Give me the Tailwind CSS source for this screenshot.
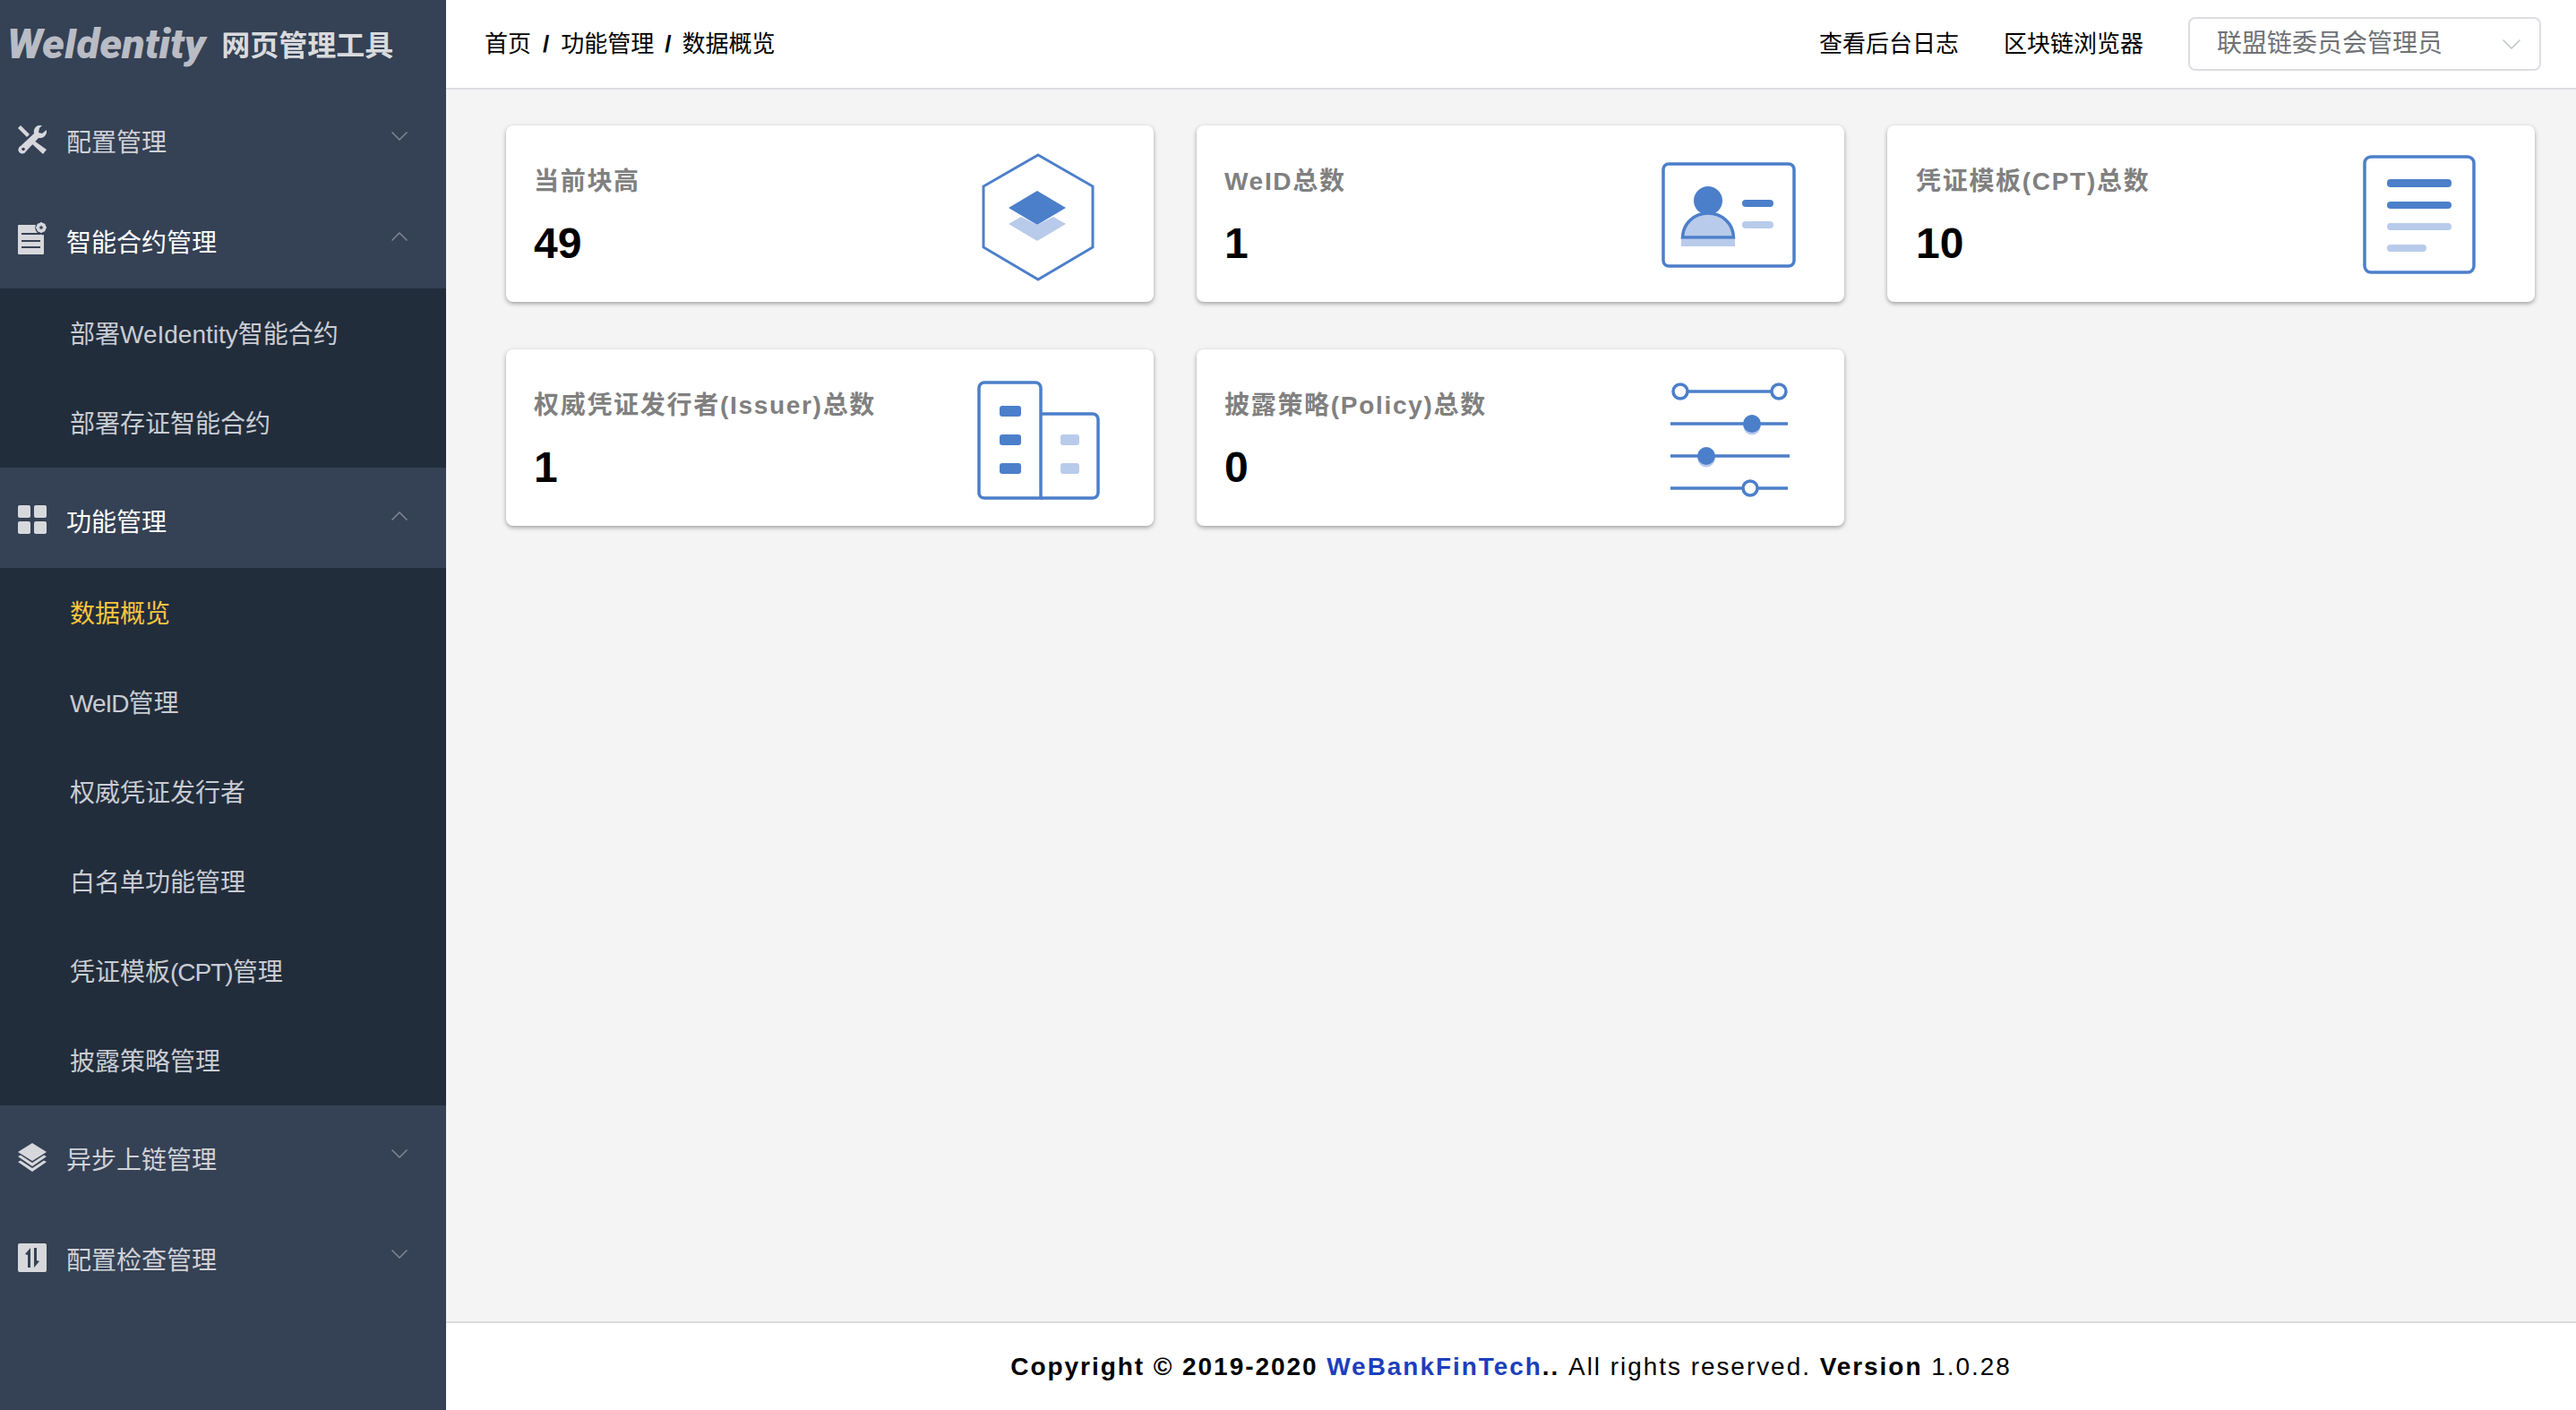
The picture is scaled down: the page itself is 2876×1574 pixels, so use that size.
<!DOCTYPE html>
<html lang="zh-CN">
<head>
    <meta charset="UTF-8">
    <title>WeIdentity 网页管理工具</title>
    <script src="https://cdn.jsdelivr.net/npm/@tailwindcss/browser@4"></script>
</head>
<body class="h-screen w-full overflow-hidden flex bg-[#f4f4f4] text-black font-['Liberation_Sans','Noto_Sans_CJK_SC',sans-serif]">

    <!-- Sidebar -->
    <aside class="w-[498px] h-full shrink-0 bg-[#354154] text-[28px] text-[#d0d2d8]">
        <div class="h-[98px] flex items-center pl-[8px]">
            <span class="font-['Roboto',sans-serif] font-black italic text-[47px] text-[#b9bcc4]">WeIdentity</span>
            <span class="ml-[18px] mt-[4px] text-[32px] font-bold text-[#d9dade]">网页管理工具</span>
        </div>

        <div class="h-[112px] flex items-center pl-[20px] pr-[43px]">
            <svg class="w-[32px] h-[32px] mt-[4px] shrink-0 text-[#d7d8dc]" viewBox="0 0 32 32" fill="currentColor">
                <path d="M0 3 L3 0 L13 10 L10 13 Z"/>
                <path d="M18 17 L32 27 L28 32 L15 20 Z"/>
                <path d="M32 5 L27 9 L23 8 L24 3 L27 0 C21 -1 17 3 18 9 L3 23 A4.5 4.5 0 1 0 9 29 L23 14 C28 15 33 11 32 5 Z"/>
                <circle cx="6" cy="26.5" r="1.8" fill="#354154"/>
            </svg>
            <span class="ml-[22px] mt-[12px]">配置管理</span>
            <svg class="ml-auto w-[18px] h-[10px] mb-[4px] text-[#7f8794]" viewBox="0 0 18 10" fill="none" stroke="currentColor" stroke-width="1.5"><path d="M0.5 0.5 L9 9 L17.5 0.5"/></svg>
        </div>

        <div class="h-[112px] flex items-center pl-[20px] pr-[43px] text-white">
            <svg class="w-[32px] h-[36px] shrink-0 text-[#d7d8dc]" viewBox="0 0 32 36" fill="currentColor">
                <path d="M1 3 H20 A8 8 0 0 0 29 14 V35 A1 1 0 0 1 28 36 H1 A1 1 0 0 1 0 35 V4 A1 1 0 0 1 1 3 Z"/>
                <path d="M4 13 H25 M4 21 H25 M4 28 H25" stroke="#354154" stroke-width="2" fill="none"/>
                <circle cx="26" cy="6" r="4" fill="none" stroke="currentColor" stroke-width="3"/>
                <path d="M26 0 V12 M20 6 H32 M22 2 L30 10 M30 2 L22 10" stroke="currentColor" stroke-width="1.6" fill="none"/>
                <circle cx="26" cy="6" r="1.8" fill="#354154"/>
            </svg>
            <span class="ml-[22px] mt-[12px]">智能合约管理</span>
            <svg class="ml-auto w-[18px] h-[10px] mb-[4px] text-[#7f8794]" viewBox="0 0 18 10" fill="none" stroke="currentColor" stroke-width="1.5"><path d="M0.5 9.5 L9 1 L17.5 9.5"/></svg>
        </div>

        <div class="bg-[#222d3c] text-[#c9ccd2]">
            <div class="h-[100px] flex items-center pl-[78px] pt-[4px]">部署WeIdentity智能合约</div>
            <div class="h-[100px] flex items-center pl-[78px] pt-[4px]">部署存证智能合约</div>
        </div>

        <div class="h-[112px] flex items-center pl-[20px] pr-[43px] text-white">
            <svg class="w-[32px] h-[32px] mt-[4px] shrink-0 text-[#d7d8dc]" viewBox="0 0 32 32" fill="currentColor">
                <rect x="0" y="0" width="14" height="14" rx="2"/>
                <rect x="18" y="0" width="14" height="14" rx="2"/>
                <rect x="0" y="18" width="14" height="14" rx="2"/>
                <rect x="18" y="18" width="14" height="14" rx="2"/>
            </svg>
            <span class="ml-[22px] mt-[12px]">功能管理</span>
            <svg class="ml-auto w-[18px] h-[10px] mb-[4px] text-[#7f8794]" viewBox="0 0 18 10" fill="none" stroke="currentColor" stroke-width="1.5"><path d="M0.5 9.5 L9 1 L17.5 9.5"/></svg>
        </div>

        <div class="bg-[#222d3c] text-[#c9ccd2]">
            <div class="h-[100px] flex items-center pl-[78px] pt-[4px] text-[#fbc63c]">数据概览</div>
            <div class="h-[100px] flex items-center pl-[78px] pt-[4px]"><span class="tracking-[-1px]">WeID</span>管理</div>
            <div class="h-[100px] flex items-center pl-[78px] pt-[4px]">权威凭证发行者</div>
            <div class="h-[100px] flex items-center pl-[78px] pt-[4px]">白名单功能管理</div>
            <div class="h-[100px] flex items-center pl-[78px] pt-[4px]">凭证模板<span class="tracking-[-1px]">(CPT)</span>管理</div>
            <div class="h-[100px] flex items-center pl-[78px] pt-[4px]">披露策略管理</div>
        </div>

        <div class="h-[112px] flex items-center pl-[20px] pr-[43px]">
            <svg class="w-[32px] h-[32px] mt-[4px] shrink-0 text-[#d7d8dc]" viewBox="0 0 32 32" fill="currentColor">
                <path d="M16 0 L32 10 L16 20 L0 10 Z"/>
                <path d="M0 15 L3 13.5 L16 22 L29 13.5 L32 15 L16 26 Z"/>
                <path d="M0 21 L3 19.5 L16 28 L29 19.5 L32 21 L16 32 Z"/>
            </svg>
            <span class="ml-[22px] mt-[12px]">异步上链管理</span>
            <svg class="ml-auto w-[18px] h-[10px] mb-[4px] text-[#7f8794]" viewBox="0 0 18 10" fill="none" stroke="currentColor" stroke-width="1.5"><path d="M0.5 0.5 L9 9 L17.5 0.5"/></svg>
        </div>

        <div class="h-[112px] flex items-center pl-[20px] pr-[43px]">
            <svg class="w-[32px] h-[32px] mt-[4px] shrink-0 text-[#d7d8dc]" viewBox="0 0 32 32">
                <rect width="32" height="32" rx="2" fill="currentColor"/>
                <path d="M8 12 L14 5 V27 H11 V13 Z" fill="#354154"/>
                <path d="M24 20 L18 27 V5 H21 V19 Z" fill="#354154"/>
            </svg>
            <span class="ml-[22px] mt-[12px]">配置检查管理</span>
            <svg class="ml-auto w-[18px] h-[10px] mb-[4px] text-[#7f8794]" viewBox="0 0 18 10" fill="none" stroke="currentColor" stroke-width="1.5"><path d="M0.5 0.5 L9 9 L17.5 0.5"/></svg>
        </div>
    </aside>

    <div class="flex-1 min-w-0 h-full flex flex-col">
        <!-- Header -->
        <header class="h-[100px] shrink-0 bg-white border-b-2 border-[#dcdee2] flex items-center pl-[43px] pr-[39px] text-[26px] leading-none">
            <span class="flex items-center">
                <span>首页</span>
                <span class="mx-[13px] font-bold">/</span>
                <span>功能管理</span>
                <span class="mx-[12px] font-bold">/</span>
                <span>数据概览</span>
            </span>
            <span class="ml-auto">查看后台日志</span>
            <span class="ml-[50px]">区块链浏览器</span>
            <div class="ml-[50px] w-[394px] h-[60px] border-2 border-[#dcdee2] rounded-[8px] flex items-center pl-[30px] pr-[21px] text-[28px] text-[#6f7276]">
                <span>联盟链委员会管理员</span>
                <svg class="ml-auto w-[20px] h-[11px] text-[#c0c4cc]" viewBox="0 0 20 11" fill="none" stroke="currentColor" stroke-width="1.5"><path d="M0.5 0.5 L10 10 L19.5 0.5"/></svg>
            </div>
        </header>

        <!-- Cards -->
        <main class="flex-1 min-h-0 pt-[40px] pl-[67px] pr-[43px]">
            <div class="grid grid-cols-[723px_723px_723px] gap-x-[48px] gap-y-[53px]">

                <div class="h-[197px] bg-white rounded-[8px] shadow-[0_2px_5px_rgba(0,0,0,0.35)] flex justify-between pl-[31px]">
                    <div>
                        <div class="mt-[46px] text-[28px] leading-[34px] font-bold text-[#808080] tracking-[1.7px]">当前块高</div>
                        <div class="mt-[27px] text-[48px] leading-[50px] font-bold">49</div>
                    </div>
                    <svg class="w-[126px] h-[146px] mt-[30px] mr-[66px]" viewBox="1096 170 126 146" fill="none">
                        <path d="M1159 173 L1220 208 V276 L1159 312 L1098 276 V208 Z" stroke="#4c7fca" stroke-width="3"/>
                        <path d="M1126 232 L1158 251 L1190 232 L1158 213 Z" fill="#4c7fca"/>
                        <path d="M1126 250 L1140 242 L1158 251 L1176 242 L1190 250 L1158 269 Z" fill="#b9cbeb"/>
                    </svg>
                </div>

                <div class="h-[197px] bg-white rounded-[8px] shadow-[0_2px_5px_rgba(0,0,0,0.35)] flex justify-between pl-[31px]">
                    <div>
                        <div class="mt-[46px] text-[28px] leading-[34px] font-bold text-[#808080] tracking-[1.7px]">WeID总数</div>
                        <div class="mt-[27px] text-[48px] leading-[50px] font-bold">1</div>
                    </div>
                    <svg class="w-[152px] h-[118px] mt-[41px] mr-[52px]" viewBox="1854 181 152 118" fill="none">
                        <rect x="1856" y="183" width="146" height="114" rx="6" stroke="#4c7fca" stroke-width="3.5"/>
                        <circle cx="1906" cy="224" r="16" fill="#4c7fca"/>
                        <path d="M1877.5 265 C1878 249 1891 238 1906 238 C1921 238 1934 249 1934.5 265 Z" fill="#b9cbeb" stroke="#4c7fca" stroke-width="3.5"/>
                        <rect x="1876" y="267" width="60" height="8" fill="#b9cbeb"/>
                        <rect x="1944" y="223" width="35" height="8" rx="4" fill="#4c7fca"/>
                        <rect x="1944" y="247" width="35" height="8" rx="4" fill="#b9cbeb"/>
                    </svg>
                </div>

                <div class="h-[197px] bg-white rounded-[8px] shadow-[0_2px_5px_rgba(0,0,0,0.35)] flex justify-between pl-[32px]">
                    <div>
                        <div class="mt-[46px] text-[28px] leading-[34px] font-bold text-[#808080] tracking-[1.7px]">凭证模板(CPT)总数</div>
                        <div class="mt-[27px] text-[48px] leading-[50px] font-bold">10</div>
                    </div>
                    <svg class="w-[126px] h-[133px] mt-[33px] mr-[66px]" viewBox="2638 173 126 133" fill="none">
                        <rect x="2640" y="175" width="122" height="129" rx="7" stroke="#4c7fca" stroke-width="3.5"/>
                        <rect x="2665" y="200" width="72" height="9" rx="4" fill="#4c7fca"/>
                        <rect x="2665" y="225" width="72" height="8" rx="4" fill="#4c7fca"/>
                        <rect x="2665" y="249" width="72" height="8" rx="4" fill="#b9cbeb"/>
                        <rect x="2665" y="273" width="44" height="8" rx="4" fill="#b9cbeb"/>
                    </svg>
                </div>

                <div class="h-[197px] bg-white rounded-[8px] shadow-[0_2px_5px_rgba(0,0,0,0.35)] flex justify-between pl-[31px]">
                    <div>
                        <div class="mt-[46px] text-[28px] leading-[34px] font-bold text-[#808080] tracking-[1.7px]">权威凭证发行者(Issuer)总数</div>
                        <div class="mt-[27px] text-[48px] leading-[50px] font-bold">1</div>
                    </div>
                    <svg class="w-[137px] h-[133px] mt-[35px] mr-[60px]" viewBox="1091 425 137 133" fill="none">
                        <path d="M1093 551 V433 A6 6 0 0 1 1099 427 H1156 A6 6 0 0 1 1162 433 V556 H1099 A6 6 0 0 1 1093 551 Z" stroke="#4c7fca" stroke-width="3.5"/>
                        <path d="M1162 462 H1220 A6 6 0 0 1 1226 468 V550 A6 6 0 0 1 1220 556 H1162" stroke="#4c7fca" stroke-width="3.5"/>
                        <rect x="1116" y="453" width="24" height="12" rx="3" fill="#4c7fca"/>
                        <rect x="1116" y="485" width="24" height="12" rx="3" fill="#4c7fca"/>
                        <rect x="1116" y="517" width="24" height="12" rx="3" fill="#4c7fca"/>
                        <rect x="1184" y="485" width="21" height="12" rx="3" fill="#b9cbeb"/>
                        <rect x="1184" y="517" width="21" height="12" rx="3" fill="#b9cbeb"/>
                    </svg>
                </div>

                <div class="h-[197px] bg-white rounded-[8px] shadow-[0_2px_5px_rgba(0,0,0,0.35)] flex justify-between pl-[31px]">
                    <div>
                        <div class="mt-[46px] text-[28px] leading-[34px] font-bold text-[#808080] tracking-[1.7px]">披露策略(Policy)总数</div>
                        <div class="mt-[27px] text-[48px] leading-[50px] font-bold">0</div>
                    </div>
                    <svg class="w-[136px] h-[130px] mt-[35px] mr-[59px]" viewBox="1864 425 136 130" fill="none" stroke="#4c7fca" stroke-width="3.5">
                        <path d="M1885 437 H1977 M1865 473 H1996 M1865 509 H1998 M1865 545 H1996"/>
                        <circle cx="1876" cy="437" r="8" fill="white"/>
                        <circle cx="1986" cy="437" r="8" fill="white"/>
                        <circle cx="1956" cy="476" r="9.5" fill="#b9cbeb" stroke="none"/>
                        <circle cx="1956" cy="473" r="10" fill="#4c7fca" stroke="none"/>
                        <circle cx="1905" cy="512" r="9.5" fill="#b9cbeb" stroke="none"/>
                        <circle cx="1905" cy="509" r="10" fill="#4c7fca" stroke="none"/>
                        <circle cx="1954" cy="545" r="8" fill="white"/>
                    </svg>
                </div>
            </div>
        </main>

        <!-- Footer -->
        <footer class="h-[99px] shrink-0 bg-white border-t-2 border-[#dcdcdc] flex items-center justify-center text-[28px] tracking-[1.95px] whitespace-pre">
            <b>Copyright © 2019-2020 </b><b class="text-[#1d3fbb]">WeBankFinTech</b><b>.</b><b>. </b><span>All rights reserved. </span><b>Version </b><span>1.0.28</span>
        </footer>
    </div>
</body>
</html>
